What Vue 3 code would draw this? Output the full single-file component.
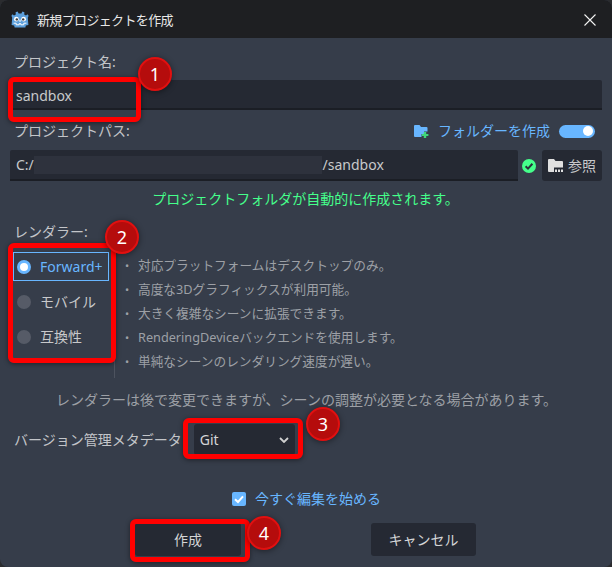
<script setup>
const features = [
  '対応プラットフォームはデスクトップのみ。',
  '高度な3Dグラフィックスが利用可能。',
  '大きく複雑なシーンに拡張できます。',
  'RenderingDeviceバックエンドを使用します。',
  '単純なシーンのレンダリング速度が遅い。'
]

const marks = [
  { n: 1, cls: 'm1' },
  { n: 2, cls: 'm2' },
  { n: 3, cls: 'm3' },
  { n: 4, cls: 'm4' }
]
</script>

<template>
  <div class="window">
    <div class="titlebar">
      <svg class="logo" viewBox="0 0 18 18" width="18" height="18">
        <path fill="#5c9fdc" d="M6.6 .6 L7.6 2.4 H10.4 L11.4 .6 L13.4 1.2 L13.2 3.4 L15 4.4 L16.4 3.2 L17.6 4.8 L16.8 6.8 L17.4 14 L14.8 14.4 L14.4 16.6 H3.6 L3.2 14.4 L.6 14 L1.2 6.8 L.4 4.8 L1.6 3.2 L3 4.4 L4.8 3.4 L4.6 1.2 Z"/>
        <circle cx="5.4" cy="8.2" r="2.4" fill="#fff"/>
        <circle cx="12.6" cy="8.2" r="2.4" fill="#fff"/>
        <circle cx="5.8" cy="8.4" r="1.2" fill="#3a3b3e"/>
        <circle cx="12.2" cy="8.4" r="1.2" fill="#3a3b3e"/>
        <rect x="8.4" y="8.6" width="1.2" height="2.2" fill="#fff"/>
        <path fill="none" stroke="#fff" stroke-width="1" d="M2.6 12.2 H5.2 V13.8 H8.2 V12.6 H9.8 V13.8 H12.8 V12.2 H15.4"/>
      </svg>
      <span class="title">新規プロジェクトを作成</span>
      <svg class="close" viewBox="0 0 12 12" width="12" height="12">
        <path d="M.5 .5 L11.5 11.5 M11.5 .5 L.5 11.5" stroke="#f2f2f2" stroke-width="1.1" fill="none"/>
      </svg>
    </div>

    <div class="content">
      <div class="label name-label">プロジェクト名:</div>
      <div class="input name-input">sandbox</div>

      <div class="path-head">
        <span class="label">プロジェクトパス:</span>
        <div class="create-folder">
          <svg viewBox="0 0 15 13" width="15" height="13">
            <path fill="#68b6ff" d="M0 1 Q0 0 1 0 H5.5 L7 2 H12.5 Q13.5 2 13.5 3 V6.5 H10 V9 H7.5 V12 H1 Q0 12 0 11 Z"/>
            <path fill="#3fd67a" d="M9.8 7 H12.2 V9 H14.4 V11 H12.2 V13 H9.8 V11 H7.8 V9 H9.8 Z"/>
          </svg>
          <span>フォルダーを作成</span>
          <span class="toggle"><i></i></span>
        </div>
      </div>

      <div class="path-row">
        <div class="input path-input">
          <span>C:/</span>
          <span class="blur"></span>
          <span class="path-end">:/sandbox</span>
        </div>
        <svg class="ok" viewBox="0 0 14 14" width="14" height="14">
          <circle cx="7" cy="7" r="7" fill="#45ff8b"/>
          <path d="M3.6 7.2 L6 9.6 L10.4 4.8" fill="none" stroke="#2b303a" stroke-width="2"/>
        </svg>
        <div class="btn browse">
          <svg viewBox="0 0 15 13" width="15" height="13">
            <path fill="#e0e0e0" d="M0 1 Q0 0 1 0 H6 L7.5 2 H14 Q15 2 15 3 V8.5 H6 V13 H1 Q0 13 0 12 Z"/>
            <path fill="#e0e0e0" d="M7 10.5 h2 v2.5 h-2 z M10 10.5 h2 v2.5 h-2 z M13 10.5 h2 v2.5 h-2 z"/>
          </svg>
          <span>参照</span>
        </div>
      </div>

      <div class="message">プロジェクトフォルダが自動的に作成されます。</div>

      <div class="label renderer-label">レンダラー:</div>
      <div class="renderer">
        <div class="radios">
          <div class="radio on"><i></i>Forward+</div>
          <div class="radio"><i></i>モバイル</div>
          <div class="radio"><i></i>互換性</div>
        </div>
        <ul class="features">
          <li v-for="f in features" :key="f">{{ f }}</li>
        </ul>
      </div>

      <div class="note">レンダラーは後で変更できますが、シーンの調整が必要となる場合があります。</div>

      <div class="vcs">
        <span class="label">バージョン管理メタデータ</span>
        <div class="select">
          <span>Git</span>
          <svg viewBox="0 0 10 6" width="10" height="6">
            <path d="M1 1 L5 5 L9 1" fill="none" stroke="#d0d0d0" stroke-width="1.8"/>
          </svg>
        </div>
      </div>

      <div class="edit-now">
        <span class="checkbox">
          <svg viewBox="0 0 14 14" width="14" height="14">
            <path d="M3 7.2 L6 10 L11 4.4" fill="none" stroke="#fff" stroke-width="2"/>
          </svg>
        </span>
        <span>今すぐ編集を始める</span>
      </div>

      <div class="actions">
        <div class="btn action">作成</div>
        <div class="btn action cancel">キャンセル</div>
      </div>
    </div>

    <div class="box b1"></div>
    <div class="box b2"></div>
    <div class="box b3"></div>
    <div class="box b4"></div>
    <div v-for="m in marks" :key="m.n" class="mark" :class="m.cls">{{ m.n }}</div>
  </div>
</template>

<style>
html, body {
  margin: 0;
  background: #2b2c2f;
}
</style>

<style scoped>
.window {
  position: relative;
  width: 612px;
  height: 567px;
  box-sizing: border-box;
  overflow: hidden;
  border-radius: 8px;
  background: #363d4a;
  font-family: "Noto Sans", "Noto Sans CJK JP", sans-serif;
  font-size: 14px;
  color: #c8c9cb;
  line-height: 20px;
}
.titlebar {
  height: 38px;
  box-sizing: border-box;
  background: #1e1f22;
  display: flex;
  align-items: center;
  padding: 1px 16px 0 11px;
  color: #e8e8e8;
}
.logo {
  margin-right: 8px;
}
.title {
  flex: 1;
  font-size: 13px;
  letter-spacing: -0.65px;
}
.content {
  padding: 0 10px;
}
.label {
  color: #c3c5c9;
}
.name-label {
  padding: 14px 0 0 4px;
  height: 28px;
}
.input {
  background: #252933;
  border-bottom: 2px solid #1b1e25;
  border-radius: 2px 2px 0 0;
  box-sizing: border-box;
  display: flex;
  align-items: center;
  padding-left: 6px;
  color: #c8c9cb;
}
.name-input {
  height: 30px;
  padding-top: 3px;
}
.path-head {
  height: 40px;
  display: flex;
  align-items: center;
  justify-content: space-between;
  padding: 2px 7px 0 4px;
  box-sizing: border-box;
}
.create-folder {
  display: flex;
  align-items: center;
  color: #68b6ff;
}
.create-folder svg {
  margin-right: 9px;
}
.toggle {
  width: 36px;
  height: 13px;
  margin-left: 9px;
  border-radius: 7px;
  background: #68b6ff;
  position: relative;
}
.toggle i {
  position: absolute;
  right: 2px;
  top: 1.5px;
  width: 10px;
  height: 10px;
  border-radius: 50%;
  background: #fff;
}
.path-row {
  display: flex;
  align-items: center;
  height: 31px;
}
.path-input {
  width: 508px;
  height: 31px;
}
.blur {
  width: 288px;
  height: 18px;
  background: #2e323d;
  position: relative;
  z-index: 1;
}
.path-end {
  margin-left: -3px;
}
.ok {
  margin: 0 6px 0 4px;
}
.btn {
  background: #252933;
  border-radius: 3px;
  display: flex;
  align-items: center;
  justify-content: center;
  box-sizing: border-box;
}
.browse {
  width: 60px;
  height: 31px;
  gap: 5px;
}
.message {
  margin-top: 8px;
  text-align: center;
  color: #45ff8b;
  height: 20px;
  padding-right: 1px;
}
.renderer-label {
  margin-top: 13px;
  padding-left: 4px;
  height: 20px;
}
.renderer {
  display: flex;
  margin-top: 10px;
  height: 126px;
}
.radios {
  width: 105px;
  border-right: 1px solid #4d535f;
  padding-left: 3px;
  box-sizing: border-box;
}
.radio {
  width: 96px;
  height: 35px;
  display: flex;
  align-items: center;
  box-sizing: border-box;
  padding-left: 4px;
  color: #c8c9cb;
}
.radio i {
  width: 14px;
  height: 14px;
  border-radius: 50%;
  background: #565b67;
  margin-right: 9px;
  box-sizing: border-box;
}
.radio.on {
  height: 29px;
  margin-bottom: 3px;
  color: #68b6ff;
  border: 1px solid #68b6ff;
  padding-left: 3px;
}
.radio.on i {
  background: #fff;
  border: 3px solid #68b6ff;
}
.features {
  list-style: none;
  margin: 1px 0 0;
  padding: 0 0 0 10px;
  color: #9da0a6;
  font-size: 12.7px;
}
.features li {
  height: 24px;
  line-height: 24px;
  white-space: nowrap;
}
.features li::before {
  content: "•";
  display: inline-block;
  width: 13px;
  font-size: 11px;
}
.note {
  margin-top: 12px;
  padding-left: 1px;
  height: 24px;
  text-align: center;
  color: #9da0a6;
}
.vcs {
  display: flex;
  align-items: center;
  margin-top: 10px;
  height: 31px;
  padding-left: 4px;
}
.select {
  margin-left: 12px;
  width: 101px;
  height: 31px;
  background: #252933;
  border-radius: 3px;
  box-sizing: border-box;
  display: flex;
  align-items: center;
  justify-content: space-between;
  padding: 0 6px 0 6px;
  color: #d4d5d7;
}
.edit-now {
  margin-top: 34px;
  height: 20px;
  display: flex;
  align-items: center;
  padding-left: 222px;
  color: #68b6ff;
}
.checkbox {
  width: 14px;
  height: 14px;
  border-radius: 2px;
  background: #68b6ff;
  margin-right: 9px;
  display: block;
}
.checkbox svg {
  display: block;
}
.actions {
  margin-top: 14px;
  display: flex;
  padding-left: 125px;
  gap: 130px;
}
.action {
  width: 106px;
  height: 33px;
  color: #d4d5d7;
}
.cancel {
  width: 105px;
}
.box {
  position: absolute;
  box-sizing: border-box;
  border: 5px solid #f00;
  border-radius: 6px;
  box-shadow: 0 1px 5px rgba(0, 0, 0, 0.45);
}
.b1 { left: 8px; top: 77px; width: 133px; height: 45px; }
.b2 { left: 8px; top: 243px; width: 108px; height: 120px; }
.b3 { left: 183px; top: 418px; width: 120px; height: 41px; }
.b4 { left: 130px; top: 519px; width: 120px; height: 43px; }
.mark {
  position: absolute;
  width: 34px;
  height: 34px;
  box-sizing: border-box;
  border: 2px solid #e11010;
  border-radius: 50%;
  background: #b50c0c;
  box-shadow: 0 1px 6px rgba(0, 0, 0, 0.45);
  color: #fff;
  font-size: 18px;
  line-height: 30px;
  text-align: center;
  font-family: "Noto Sans", sans-serif;
}
.m1 { left: 138px; top: 57px; }
.m2 { left: 105px; top: 220px; }
.m3 { left: 306px; top: 407px; }
.m4 { left: 247px; top: 516px; }
</style>
